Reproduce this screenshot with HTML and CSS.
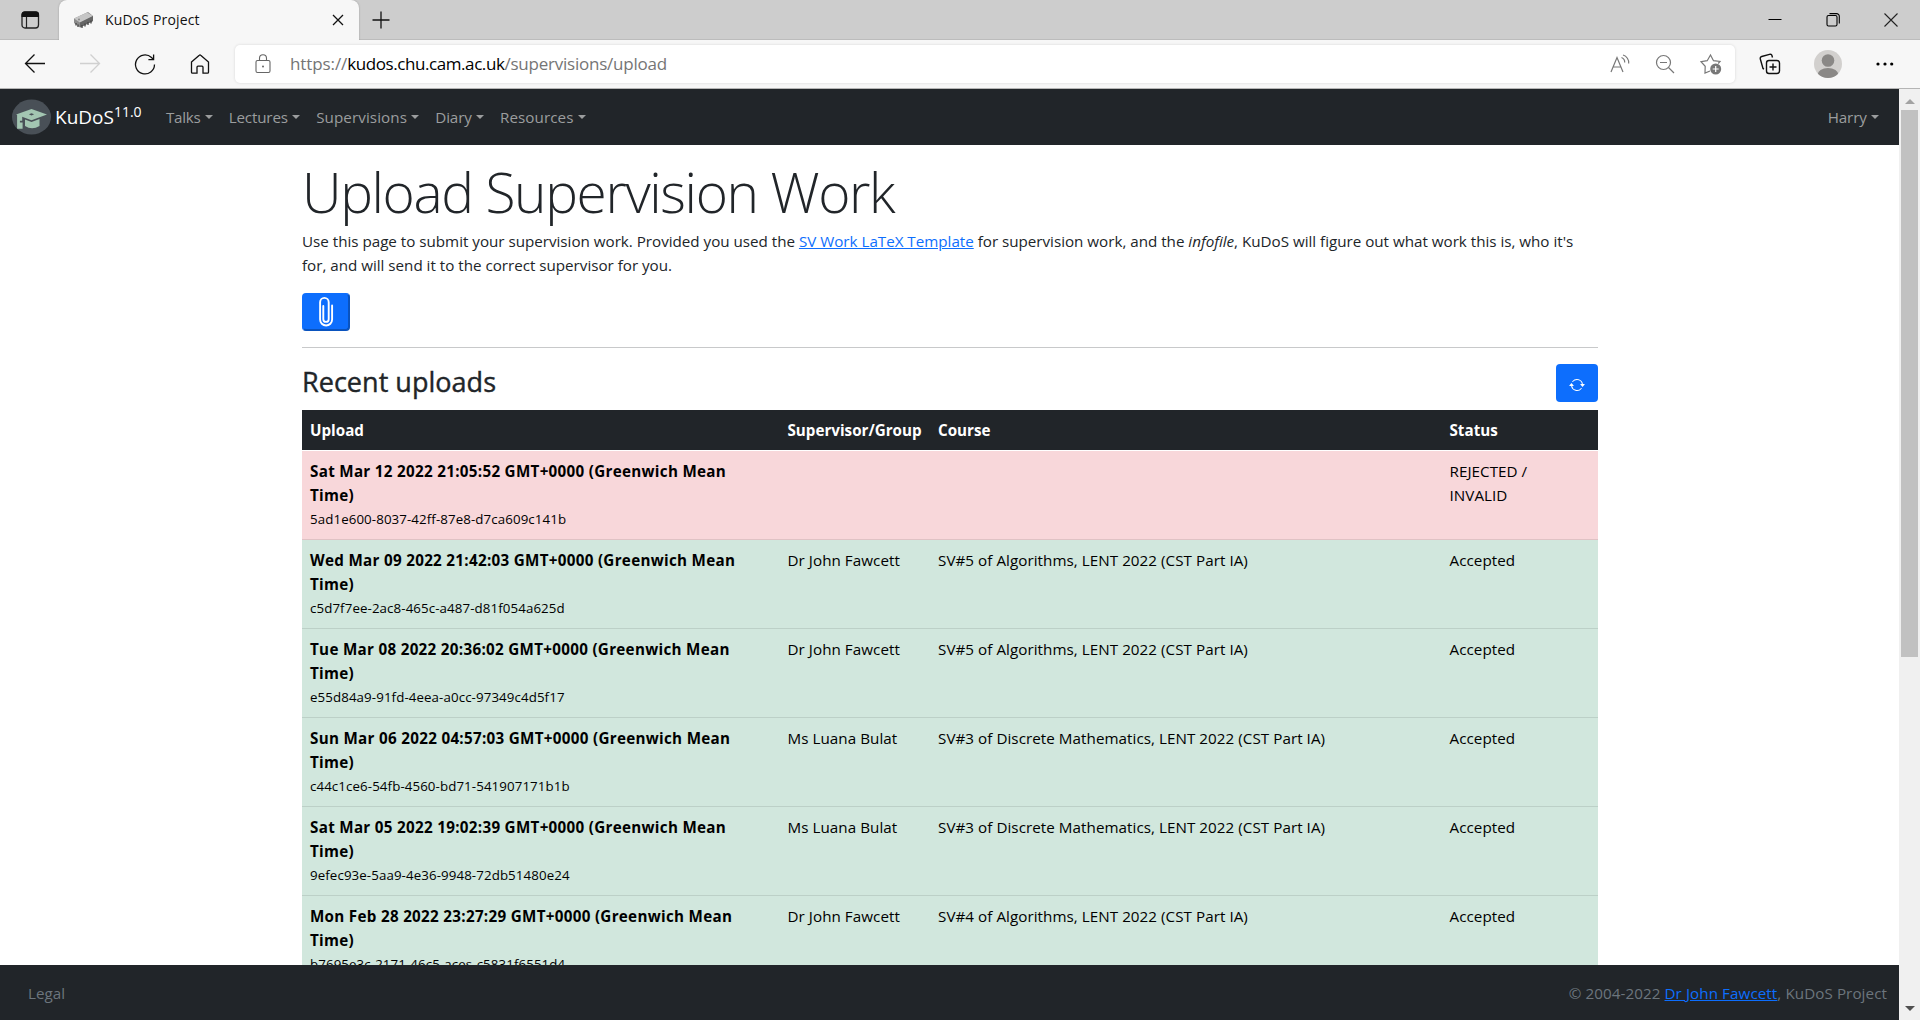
FILE: index.html
```html
<!DOCTYPE html>
<html lang="en">
<head>
<meta charset="utf-8">
<title>KuDoS Project</title>
<link rel="stylesheet" href="styles.css">
</head>
<body>
<div class="tabstrip">
  <div class="tab-actions"><svg width="20" height="20" viewBox="0 0 20 20"><rect x="2" y="2" width="16.500" height="16" rx="3" fill="none" stroke="#222" stroke-width="1.300"/><path d="M1.500 7V4.500a3 3 0 0 1 3-3H16a3 3 0 0 1 3 3V7z" fill="#111"/><path d="M6.500 7v11" stroke="#222" stroke-width="1.200"/></svg></div>
  <div class="tab">
    <svg class="favicon" width="22" height="18" viewBox="0 0 22 18"><path d="M1 7.500 15 1l5 4v5L7 16.500 1 12z" fill="#8b8b8b"/><path d="M1 7.500 14 1.500l6 3.500L7 11.500z" fill="#c6c6c6"/><path d="M7 11.500v5L20 10V5z" fill="#666"/><path d="M9 14v3M12 12.500v3M15 11v3M18 9.500v3M3 12v2.500M5 13.500V16" stroke="#444" stroke-width="1.300"/><circle cx="6" cy="8.500" r="1" fill="#888"/></svg>
    <span class="tab-title">KuDoS Project</span>
    <svg class="tab-close" width="12" height="12" viewBox="0 0 12 12"><path d="M1 1l10 10M11 1 1 11" stroke="#111" stroke-width="1.300"/></svg>
  </div>
  <svg class="new-tab" width="18" height="18" viewBox="0 0 18 18"><path d="M9 .5v17M.5 9h17" stroke="#111" stroke-width="1.300"/></svg>
  <div class="window-buttons">
    <svg width="14" height="14" viewBox="0 0 14 14"><path d="M.5 6.500h13" stroke="#000"/></svg>
    <svg width="14" height="14" viewBox="0 0 14 14" fill="none" stroke="#000" stroke-width="1.100"><rect x="1" y="2.500" width="10" height="10.500" rx="1.500"/><path d="M3.500.6h7A2.700 2.700 0 0 1 13.300 3.300V10.500"/></svg>
    <svg width="14" height="14" viewBox="0 0 14 14"><path d="M.5.5l13 13M13.500.5l-13 13" stroke="#222" stroke-width="1.100"/></svg>
  </div>
</div>
<div class="toolbar">
  <div class="nav-buttons">
    <svg width="22" height="22" viewBox="0 0 22 22" fill="none" stroke="#111" stroke-width="1.300"><path d="M21 10.500H1.500M10.500 1.500 1.500 10.500l9 9"/></svg>
    <svg width="22" height="22" viewBox="0 0 22 22" fill="none" stroke="#d0d0d0" stroke-width="1.300"><path d="M1 10.500h19.500M11.500 1.500l9 9-9 9"/></svg>
    <svg width="22" height="22" viewBox="0 0 22 22" fill="none" stroke="#111" stroke-width="1.300"><path d="M20.500 11.500A9.500 9.500 0 1 1 17.500 4.500L19.500 6.500M19.600 1.500v5.200h-5.200"/></svg>
    <svg width="22" height="22" viewBox="0 0 22 22" fill="none" stroke="#111" stroke-width="1.300"><path d="M2.500 9 10.300 2.200a1 1 0 0 1 1.400 0L19.500 9v10.200a1 1 0 0 1-1 1H14v-6a1 1 0 0 0-1-1H9a1 1 0 0 0-1 1v6H3.500a1 1 0 0 1-1-1z"/></svg>
  </div>
  <div class="address">
    <svg class="lock" width="16" height="20" viewBox="0 0 16 20" fill="none" stroke="#666" stroke-width="1.100"><rect x="1" y="6.500" width="14" height="12" rx="1.500"/><path d="M4.500 6.500V4.300a3.500 3.500 0 0 1 7 0v2.200"/><circle cx="8" cy="12.500" r="1" fill="#666" stroke="none"/></svg>
    <span class="url"><span class="scheme">https://</span><span class="host">kudos.chu.cam.ac.uk</span><span class="path">/supervisions/upload</span></span>
    <div class="address-icons">
      <svg width="20" height="20" viewBox="0 0 20 20" fill="none" stroke="#777" stroke-width="1.200"><path d="M1 18 7 3.500 13 18M3.200 13h7.600M11.500 3.500a5 5 0 0 1 3.200 5M13 1a8 8 0 0 1 5.700 8.500"/></svg>
      <svg width="20" height="20" viewBox="0 0 20 20" fill="none" stroke="#777" stroke-width="1.200"><circle cx="8.500" cy="8.500" r="7"/><path d="M5 8.500h7M13.500 13.500l5.500 5.500"/></svg>
      <svg width="22" height="22" viewBox="0 0 22 22" fill="none" stroke="#777" stroke-width="1.200"><path d="M10 18 5 20 5.200 13.300 1 8.700l6.200-1L10.500 2l3 5.700 6.500.8-1.800 2"/><circle cx="15.700" cy="16" r="5.500" fill="#777" stroke="none"/><path d="M15.700 13v6M12.700 16h6" stroke="#fff"/></svg>
    </div>
  </div>
  <svg class="collections" width="22" height="22" viewBox="0 0 22 22" fill="none" stroke="#111" stroke-width="1.400"><rect x="7.500" y="7.500" width="13" height="13" rx="2.500"/><path d="M14 10.500v7M10.500 14h7M5 16 4 15.500 1.300 6a2 2 0 0 1 1.400-2.500L10.500 1.300a2 2 0 0 1 2.500 1.400L13.500 4.500"/></svg>
  <svg class="profile" width="28" height="28" viewBox="0 0 28 28"><clipPath id="avatar"><circle cx="14" cy="14" r="14"/></clipPath><g clip-path="url(#avatar)"><rect width="28" height="28" fill="#d2d0ce"/><circle cx="14" cy="10.500" r="6.300" fill="#8a8886"/><ellipse cx="14" cy="25" rx="10.500" ry="7" fill="#8a8886"/></g></svg>
  <svg class="more" width="18" height="4" viewBox="0 0 18 4"><circle cx="2" cy="2" r="1.600"/><circle cx="9" cy="2" r="1.600"/><circle cx="15.700" cy="2" r="1.600"/></svg>
</div>
<div class="viewport">
  <div class="page">
    <nav class="navbar">
      <svg class="logo" width="39" height="36" viewBox="0 0 39 36"><ellipse cx="19.500" cy="18" rx="19.500" ry="17.500" fill="#495057"/><path d="M4 15.500 19.500 10 35 15.500 19.500 21.300z" fill="#a3c6b2"/><path d="M13 20.500 19.500 23 27.500 20v7q-7.500 4.500-14.500 0z" fill="#a3c6b2"/><path d="M6.500 15.800v14M8.800 16.800v5M9.200 23.500v6.300" stroke="#a3c6b2" stroke-width="2.800"/><path d="M19.500 14.200l-2.600 1.100 2.600 1.100 2.600-1.100z" fill="#495057"/></svg>
      <a class="brand">KuDoS<sup>11.0</sup></a>
      <a class="nav-link talks">Talks</a>
      <a class="nav-link">Lectures</a>
      <a class="nav-link wide">Supervisions</a>
      <a class="nav-link">Diary</a>
      <a class="nav-link wide">Resources</a>
      <a class="nav-link user">Harry</a>
    </nav>
    <main class="container">
      <h1>Upload Supervision Work</h1>
      <p class="intro">Use this page to submit your supervision work. Provided you used the <a class="link">SV Work LaTeX Template</a> for supervision work, and the <em>infofile</em>, KuDoS will figure out what work this is, who it's<br>for, and will send it to the correct supervisor for you.</p>
      <button class="btn attach"><svg width="16" height="32" viewBox="0 0 16 32" fill="none" stroke="#fff" stroke-width="1.900" stroke-linecap="round"><path d="M5.300 10v13.200a2.700 2.700 0 0 0 5.400 0V6.200a4.300 4.300 0 0 0-8.600 0V23.500a6 6 0 0 0 12 0V9.500"/></svg></button>
      <hr>
      <div class="section-head"><h3>Recent uploads</h3>
        <button class="btn refresh"><svg width="16" height="16" viewBox="0 0 16 16" fill="#fff"><path d="M11.534 7h3.932a.25.25 0 0 1 .192.410l-1.966 2.360a.25.25 0 0 1-.384 0l-1.966-2.360a.25.25 0 0 1 .192-.410zm-11 2h3.932a.25.25 0 0 0 .192-.410L2.692 6.230a.25.25 0 0 0-.384 0L.342 8.590A.25.25 0 0 0 .534 9z"/><path fill-rule="evenodd" d="M8 3c-1.552 0-2.940.707-3.857 1.818a.5.5 0 1 1-.771-.636A6.002 6.002 0 0 1 13.917 7H12.900A5.002 5.002 0 0 0 8 3zM3.100 9a5.002 5.002 0 0 0 8.757 2.182.5.5 0 1 1 .771.636A6.002 6.002 0 0 1 2.083 9H3.100z"/></svg></button></div>
      <table>
        <colgroup><col class="c-upload"><col class="c-group"><col class="c-course"><col class="c-status"></colgroup>
        <thead><tr><th>Upload</th><th>Supervisor/Group</th><th>Course</th><th>Status</th></tr></thead>
        <tbody>
          <tr class="danger"><td><b>Sat Mar 12 2022 21:05:52 GMT+0000 (Greenwich Mean</b><b>Time)</b><small>5ad1e600-8037-42ff-87e8-d7ca609c141b</small></td><td></td><td></td><td>REJECTED /<br>INVALID</td></tr>
          <tr class="success"><td><b>Wed Mar 09 2022 21:42:03 GMT+0000 (Greenwich Mean</b><b>Time)</b><small>c5d7f7ee-2ac8-465c-a487-d81f054a625d</small></td><td>Dr John Fawcett</td><td>SV#5 of Algorithms, LENT 2022 (CST Part IA)</td><td>Accepted</td></tr>
          <tr class="success"><td><b>Tue Mar 08 2022 20:36:02 GMT+0000 (Greenwich Mean</b><b>Time)</b><small>e55d84a9-91fd-4eea-a0cc-97349c4d5f17</small></td><td>Dr John Fawcett</td><td>SV#5 of Algorithms, LENT 2022 (CST Part IA)</td><td>Accepted</td></tr>
          <tr class="success"><td><b>Sun Mar 06 2022 04:57:03 GMT+0000 (Greenwich Mean</b><b>Time)</b><small>c44c1ce6-54fb-4560-bd71-541907171b1b</small></td><td>Ms Luana Bulat</td><td>SV#3 of Discrete Mathematics, LENT 2022 (CST Part IA)</td><td>Accepted</td></tr>
          <tr class="success"><td><b>Sat Mar 05 2022 19:02:39 GMT+0000 (Greenwich Mean</b><b>Time)</b><small>9efec93e-5aa9-4e36-9948-72db51480e24</small></td><td>Ms Luana Bulat</td><td>SV#3 of Discrete Mathematics, LENT 2022 (CST Part IA)</td><td>Accepted</td></tr>
          <tr class="success"><td><b>Mon Feb 28 2022 23:27:29 GMT+0000 (Greenwich Mean</b><b>Time)</b><small>b7695e3c-2171-46c5-aces-c5831f6551d4</small></td><td>Dr John Fawcett</td><td>SV#4 of Algorithms, LENT 2022 (CST Part IA)</td><td>Accepted</td></tr>
        </tbody>
      </table>
    </main>
    <footer><span>Legal</span><span class="copyright">© 2004-2022 <a class="link">Dr John Fawcett</a>, KuDoS Project</span></footer>
  </div>
  <div class="scrollbar">
    <svg width="10" height="5" viewBox="0 0 10 5"><path d="M0 5 5 0l5 5z" fill="#a3a3a3"/></svg>
    <div class="thumb"></div>
    <svg width="10" height="5" viewBox="0 0 10 5"><path d="M0 0h10L5 5z" fill="#505050"/></svg>
  </div>
</div>
</body>
</html>
```
FILE: styles.css
```css
* { box-sizing: border-box; }
body { margin: 0; width: 1920px; height: 1020px; overflow: hidden; display: flex; flex-direction: column; font: 15.2px/24px "Open Sans", "Noto Sans", sans-serif; color: #212529; background: #fff; }
svg { display: block; flex: none; }
.tabstrip { height: 40px; flex: none; background: #cdcdcd; border-bottom: 1px solid #bcbcbc; display: flex; align-items: center; }
.tab-actions { width: 59px; padding-left: 20px; }
.tab { width: 300px; height: 40px; margin-bottom: -1px; background: #f7f7f7; border-radius: 8px 8px 0 0; display: flex; align-items: center; padding: 0 15px 0 14px; box-shadow: 0 0 2px #0004; clip-path: inset(-3px -3px 0 -3px); }
.tab-title { margin-left: 10px; font-size: 14px; letter-spacing: .15px; color: #111; white-space: nowrap; }
.tab-close { margin-left: auto; }
.new-tab { margin-left: 13px; }
.window-buttons { margin-left: auto; display: flex; gap: 44px; padding-right: 22px; }
.toolbar { height: 49px; flex: none; background: #f7f7f7; border-bottom: 1px solid #b5b5b5; display: flex; align-items: center; }
.nav-buttons { display: flex; gap: 33px; padding-left: 24px; width: 235px; }
.address { width: 1500px; height: 38px; background: #fff; border-radius: 5px; box-shadow: 0 0 3px #0002; display: flex; align-items: center; padding: 0 13px 0 20px; }
.url { margin-left: 19px; font-size: 17px; color: #757575; white-space: nowrap; padding-bottom: 1px; }
.scheme { letter-spacing: -.1px; }
.host { color: #000; letter-spacing: -.42px; }
.path { letter-spacing: -.23px; }
.address-icons { margin-left: auto; display: flex; gap: 25px; align-items: center; }
.collections { margin-left: 24px; }
.profile { margin-left: 33px; }
.more { margin-left: 34px; }
.viewport { flex: 1; min-height: 0; display: flex; }
.page { width: 1899px; display: flex; flex-direction: column; min-height: 0; }
.navbar { height: 56px; flex: none; background: #212529; display: flex; align-items: center; padding: 0 12px; color: #9b9d9e; }
.brand { color: #fff; font-size: 19px; margin-left: 4px; width: 103px; white-space: nowrap; }
.brand sup { font-size: 14px; line-height: 0; vertical-align: 7px; }
.nav-link { padding: 0 8px; display: flex; align-items: center; white-space: nowrap; letter-spacing: -.15px; }
.nav-link::after { content: ""; margin-left: 4.300px; border: 4.800px solid transparent; border-top-color: currentColor; border-bottom: 0; }
.talks { letter-spacing: -.3px; }
.wide { letter-spacing: .08px; }
.user { margin-left: auto; letter-spacing: -.15px; }
.container { flex: 1; min-height: 0; overflow: hidden; width: 1296px; margin-left: 302px; }
h1 { margin: 13px 0 0; font-size: 55px; font-weight: 300; line-height: 67px; letter-spacing: -1.380px; white-space: nowrap; }
.intro { margin: 4px 0 16px; white-space: nowrap; letter-spacing: -.012px; }
.link { color: #0d6efd; text-decoration: underline; }
.btn { display: grid; place-items: center; border: 0; border-radius: 4px; background: #0d6efd; height: 38px; padding: 0; }
.attach { width: 48px; border: 2px outset #0d6efd; border-color: #0d6efd #0a53be #0a53be #0d6efd; border-style: solid; }
.refresh { width: 42px; padding-top: 3px; }
hr { border: 0; height: 1px; background: #c8c9ca; margin: 16px 0; }
.section-head { display: flex; justify-content: space-between; height: 46px; }
h3 { margin: 0; font-size: 27px; font-weight: 500; line-height: 36px; letter-spacing: .03px; -webkit-text-stroke: .4px; }
table { border-collapse: separate; border-spacing: 0; width: 1296px; table-layout: fixed; color: #000; }
.c-upload { width: 477.500px; } .c-group { width: 150.500px; } .c-course { width: 511.500px; }
th, td { text-align: left; vertical-align: top; padding: 8px; white-space: nowrap; }
thead th { background: #212529; color: #fff; border-bottom: 1px solid #fff; height: 41px; }
tbody td { height: 89px; padding: 8px 8px 7px; border-bottom: 1px solid #bcd0c7; letter-spacing: .05px; }
td b, td small { display: block; line-height: 24px; }
td b { letter-spacing: .3px; }
td small { height: 24px; line-height: 25px; }
.danger td { background: #f8d7da; border-bottom-color: #dfc2c4; }
.success td { background: #d1e7dd; }
small { font-size: 13.300px; letter-spacing: .1px; }
footer { height: 55px; flex: none; background: #212529; color: #6c757d; display: flex; justify-content: space-between; align-items: center; padding: 0 12px 0 28px; }
.copyright { letter-spacing: .08px; }
.scrollbar { width: 21px; background: #f0f0f0; padding: 10px 0 9px; display: flex; flex-direction: column; align-items: center; }
.thumb { width: 17px; height: 547px; margin: 6px 0 auto; background: #c1c1c1; }
```
